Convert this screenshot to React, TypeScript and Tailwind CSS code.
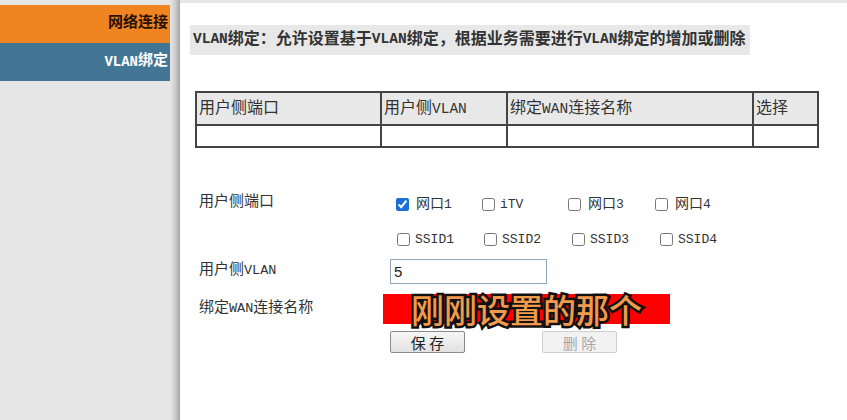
import { useState } from 'react';

const ports = [
  { id: 'lan1', text: '网口', en: '1', w: 'w-[86px]', gap: 'ml-[7px]' },
  { id: 'itv', text: '', en: 'iTV', w: 'w-[86px]', gap: 'ml-[5px]' },
  { id: 'lan3', text: '网口', en: '3', w: 'w-[87px]', gap: 'ml-[7px]' },
  { id: 'lan4', text: '网口', en: '4', w: 'w-[87px]', gap: 'ml-[7px]' },
];

const ssids = [
  { id: 'ssid1', en: 'SSID1', w: 'w-[87px]' },
  { id: 'ssid2', en: 'SSID2', w: 'w-[88px]' },
  { id: 'ssid3', en: 'SSID3', w: 'w-[88px]' },
  { id: 'ssid4', en: 'SSID4', w: 'w-[88px]' },
];

export default function App() {
  const [checked, setChecked] = useState<Record<string, boolean>>({ lan1: true });
  const [vlan, setVlan] = useState('5');

  const toggle = (id: string) => setChecked((prev) => ({ ...prev, [id]: !prev[id] }));

  return (
    <div className="flex min-h-[420px] w-[847px] bg-[#e6e6e6] font-['Liberation_Mono','Noto_Sans_CJK_SC',monospace] text-[#333]">
      {/* left menu */}
      <aside className="w-[170px] shrink-0 pt-[5px]">
        <div className="flex h-[38px] items-center justify-end bg-[#ef8421] pr-[2px] text-[15px] font-bold text-[#2b1100]">
          网络连接
        </div>
        <div className="flex h-[38px] items-center justify-end bg-[#437695] pr-[2px] text-[15px] font-bold text-white">
          <span className="text-[14px]">VLAN</span>绑定
        </div>
      </aside>
      <div className="w-[10px] shrink-0 bg-gradient-to-r from-[#e6e6e6] via-[#cfcfcf] to-[#a4a4a4]" />

      <main className="mt-[3px] flex-1 bg-white">
        <div className="ml-[10px] mt-[22px] flex h-[30px] w-[560px] items-center bg-[#e8e8e8] pl-[3px] text-[16px] font-bold">
          <span className="text-[14.5px]">VLAN</span>绑定：允许设置基于<span className="text-[14.5px]">VLAN</span>
          绑定，根据业务需要进行<span className="text-[14.5px]">VLAN</span>绑定的增加或删除
        </div>

        <table className="ml-[15px] mt-[36px] w-[624px] border-collapse border-2 border-[#444] text-left text-[16px]">
          <thead>
            <tr className="h-[33px] bg-[#e8e8e8]">
              <th className="w-[185px] border-2 border-[#444] pl-[2px] font-normal">用户侧端口</th>
              <th className="w-[126px] border-2 border-[#444] pl-[2px] font-normal">
                用户侧<span className="text-[14.5px]">VLAN</span>
              </th>
              <th className="w-[246px] border-2 border-[#444] pl-[2px] font-normal">
                绑定<span className="text-[14.5px]">WAN</span>连接名称
              </th>
              <th className="border-2 border-[#444] pl-[2px] font-normal">选择</th>
            </tr>
          </thead>
          <tbody>
            <tr className="h-[22px]">
              <td className="border-2 border-[#444]" />
              <td className="border-2 border-[#444]" />
              <td className="border-2 border-[#444]" />
              <td className="border-2 border-[#444]" />
            </tr>
          </tbody>
        </table>

        <form className="mt-[39px] pl-[19px] text-[15px]" onSubmit={(e) => e.preventDefault()}>
          <div className="flex">
            <div className="w-[191px] pt-[6px] leading-[20px]">用户侧端口</div>
            <div className="flex flex-col">
              <div className="flex h-[35px] items-center pl-[6px] text-[14px]">
                {ports.map((p) => (
                  <label key={p.id} className={`flex items-center ${p.w}`}>
                    <input
                      type="checkbox"
                      checked={!!checked[p.id]}
                      onChange={() => toggle(p.id)}
                      className="h-[13px] w-[13px] accent-[#1a6fd6]"
                    />
                    <span className={p.gap}>
                      {p.text}
                      <span className="text-[13px]">{p.en}</span>
                    </span>
                  </label>
                ))}
              </div>
              <div className="flex h-[35px] items-center pl-[7px] text-[14px]">
                {ssids.map((s) => (
                  <label key={s.id} className={`flex items-center ${s.w}`}>
                    <input
                      type="checkbox"
                      checked={!!checked[s.id]}
                      onChange={() => toggle(s.id)}
                      className="h-[13px] w-[13px] accent-[#1a6fd6]"
                    />
                    <span className="ml-[5px] text-[13px]">{s.en}</span>
                  </label>
                ))}
              </div>
            </div>
          </div>

          <div className="mt-[2px] flex h-[25px] items-center">
            <div className="w-[191px]">
              用户侧<span className="text-[13.5px]">VLAN</span>
            </div>
            <input
              value={vlan}
              onChange={(e) => setVlan(e.target.value)}
              className="h-[25px] w-[157px] border border-[#8ea7bf] px-[3px] font-['Liberation_Sans',sans-serif] text-[15px] text-[#222] outline-none"
            />
          </div>

          <div className="mt-[10px] flex h-[30px] items-center">
            <div className="w-[191px]">
              绑定<span className="text-[13.5px]">WAN</span>连接名称
            </div>
            <div className="relative ml-[-7px] h-[30px] w-[287px] bg-[#ff0000]">
              <span className="absolute left-1/2 top-1/2 -translate-x-1/2 -translate-y-1/2 whitespace-nowrap font-['Noto_Sans_CJK_SC',sans-serif] text-[33px] font-medium leading-none text-[#f29a4c] [-webkit-text-stroke:5px_#111] [paint-order:stroke_fill]">
                刚刚设置的那个
              </span>
            </div>
          </div>

          <div className="mt-[7px] flex h-[22px] font-['Noto_Sans_CJK_SC',sans-serif] text-[15px]">
            <div className="w-[191px]" />
            <button
              type="submit"
              className="h-[22px] w-[75px] rounded-[2px] border border-[#8a8a8a] bg-gradient-to-b from-[#f6f6f6] to-[#e2e2e2] leading-none text-[#222]"
            >
              保 存
            </button>
            <button
              type="button"
              disabled
              className="ml-[77px] h-[22px] w-[75px] rounded-[2px] border border-[#cfcfcf] bg-[#f2f2f2] leading-none text-[#a8a8a8]"
            >
              删 除
            </button>
          </div>
        </form>
      </main>
    </div>
  );
}
